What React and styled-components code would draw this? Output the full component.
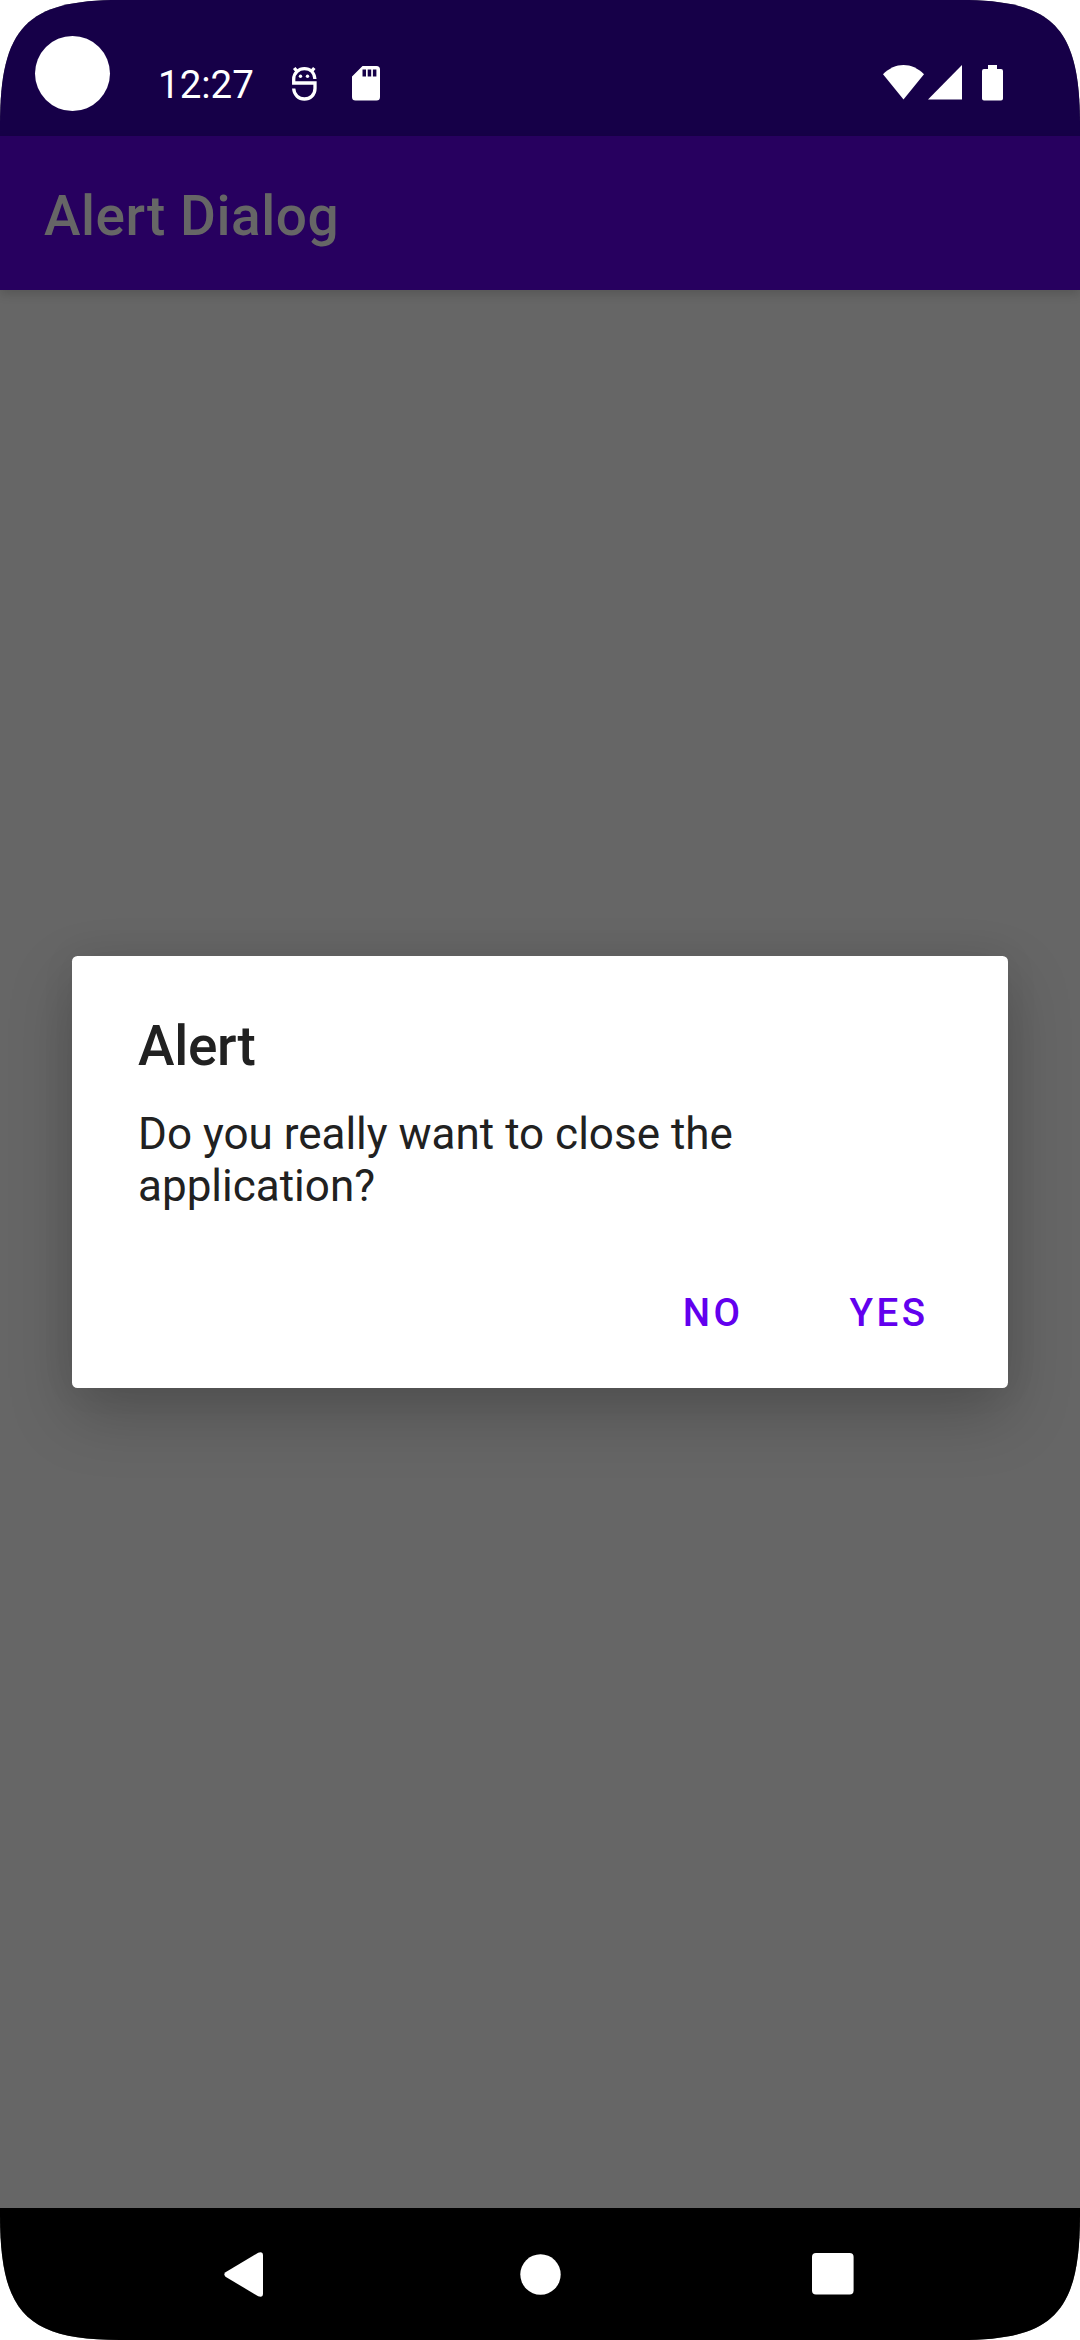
import React from "react";
import styled, { createGlobalStyle } from "styled-components";

const GlobalStyle = createGlobalStyle`
  * { box-sizing: border-box; }
  body { margin: 0; background: #fff; font-family: Roboto, "Liberation Sans", sans-serif; }
`;

const Screen = styled.div`
  width: 1080px;
  height: 2340px;
  display: flex;
  flex-direction: column;
  background: #666;
  overflow: hidden;
  clip-path: path("M0 125 C0 27 27 0 120 0 H960 C1053 0 1080 27 1080 125 V2215 C1080 2313 1053 2340 960 2340 H120 C27 2340 0 2313 0 2215 Z");
`;

const StatusBar = styled.header`
  flex: none;
  height: 136px;
  padding: 30px 77px 0 35px;
  display: flex;
  justify-content: space-between;
  background: #160048;
  color: #fff;
`;

const StatusGroup = styled.div`
  display: flex;
  align-items: ${(p) => p.$align || "center"};
  height: 107px;
  padding-top: ${(p) => p.$top || 0}px;
`;

const Camera = styled.span`
  width: 75px;
  height: 75px;
  margin: -20px 48px 0 0;
  border-radius: 50%;
  background: #fff;
`;

const Clock = styled.time`
  width: 96px;
  font-size: 38.5px;
  line-height: 46px;
  white-space: nowrap;
  margin-top: 2px;
`;

const Icon = styled.svg`
  display: block;
  flex: none;
  fill: #fff;
  margin-left: ${(p) => p.$gap || 0}px;
`;

const Stage = styled.div`
  flex: 1;
  position: relative;
  display: flex;
  flex-direction: column;
`;

const AppBar = styled.div`
  height: 154px;
  padding: 6px 44px 0;
  display: flex;
  align-items: center;
  background: #27005f;
  box-shadow: 0 4px 10px rgba(0, 0, 0, 0.16);
`;

const AppTitle = styled.h1`
  margin: 0;
  font-size: 55px;
  font-weight: 500;
  line-height: 64px;
  letter-spacing: 0.01em;
  color: #666;
`;

const Overlay = styled.div`
  position: absolute;
  inset: 0;
  display: flex;
  align-items: center;
  justify-content: center;
`;

const Dialog = styled.section`
  width: 936px;
  height: 432px;
  padding: 58px 31px 10px 66px;
  display: flex;
  flex-direction: column;
  background: #fff;
  color: #212121;
  border-radius: 5.5px;
  box-shadow: 0 26px 64px rgba(0, 0, 0, 0.21), 0 0 36px rgba(0, 0, 0, 0.06);
`;

const DialogTitle = styled.h2`
  margin: 0 0 30px;
  font-size: 55px;
  font-weight: 500;
  line-height: 64px;
  letter-spacing: -0.3px;
`;

const Message = styled.p`
  margin: 0 0 34px;
  width: 760px;
  font-size: 44px;
  line-height: 52px;
`;

const Actions = styled.div`
  display: flex;
  justify-content: flex-end;
`;

const TextButton = styled.button`
  height: 132px;
  width: 176px;
  padding: 0;
  border: 0;
  background: none;
  color: #6200ee;
  font: 500 38.5px Roboto, "Liberation Sans", sans-serif;
  letter-spacing: 0.0892857em;
  white-space: nowrap;
`;

const NavBar = styled.nav`
  flex: none;
  height: 132px;
  padding-left: 224px;
  display: flex;
  align-items: center;
  background: #000;
`;

export default function App() {
  return (
    <>
      <GlobalStyle />
      <Screen>
        <StatusBar>
          <StatusGroup>
            <Camera />
            <Clock>12:27</Clock>
            <Icon $gap={38} width="25" height="35" viewBox="0 0 25 35">
              <g fill="none" stroke="#fff" strokeWidth="3.3">
                <path d="M22.9 13C22.4 6.3 18 2.7 12.4 2.7S1.7 7 1.7 13V17H23V22.5C23 29 18 33 12.4 33S2 29 1.7 22.5" />
                <path d="M2.2 2l3.3 3.8M22.3 2L19 5.8" />
              </g>
              <circle cx="8.5" cy="10.3" r="1.7" />
              <circle cx="15.5" cy="10.3" r="1.7" />
            </Icon>
            <Icon $gap={35} width="28" height="35" viewBox="0 0 28 35">
              <path fillRule="evenodd" d="M10.5 0H24.5Q28 0 28 3.5V31Q28 34.5 24.5 34.5H3.5Q0 34.5 0 31V10.5ZM10.5 3.5V10.5H14V3.5ZM15.7 3.5V10.5H19.2V3.5ZM20.9 3.5V10.5H24.4V3.5Z" />
            </Icon>
          </StatusGroup>
          <StatusGroup $align="flex-start" $top={35}>
            <Icon width="41" height="35" viewBox="0 0 41 35">
              <path d="M0 9.3C12 -3.1 29 -3.1 41 9.3L20.5 34.5Z" />
            </Icon>
            <Icon $gap={4} width="34" height="35" viewBox="0 0 34 35">
              <path d="M34 0V34.6H0Z" />
            </Icon>
            <Icon $gap={20} width="21" height="36" viewBox="0 0 21 36">
              <path d="M6 0H15V4H19Q21 4 21 6V33.6Q21 35.6 19 35.6H2Q0 35.6 0 33.6V6Q0 4 2 4H6Z" />
            </Icon>
          </StatusGroup>
        </StatusBar>
        <Stage>
          <AppBar>
            <AppTitle>Alert Dialog</AppTitle>
          </AppBar>
          <Overlay>
            <Dialog role="alertdialog">
              <DialogTitle>Alert</DialogTitle>
              <Message>Do you really want to close the application?</Message>
              <Actions>
                <TextButton>NO</TextButton>
                <TextButton>YES</TextButton>
              </Actions>
            </Dialog>
          </Overlay>
        </Stage>
        <NavBar>
          <Icon width="39" height="45" viewBox="0 0 39 45">
            <path d="M34.2 .7Q39 -1 39 3.5V41.5Q39 46 34.2 44.3L1.5 24.7Q-.8 22.5 1.5 20.3Z" />
          </Icon>
          <Icon $gap={256.5} width="41" height="41" viewBox="0 0 41 41">
            <circle cx="20.5" cy="20.5" r="20.2" />
          </Icon>
          <Icon $gap={251.5} width="42" height="42" viewBox="0 0 42 42">
            <rect width="41.6" height="41.6" rx="4" />
          </Icon>
        </NavBar>
      </Screen>
    </>
  );
}
